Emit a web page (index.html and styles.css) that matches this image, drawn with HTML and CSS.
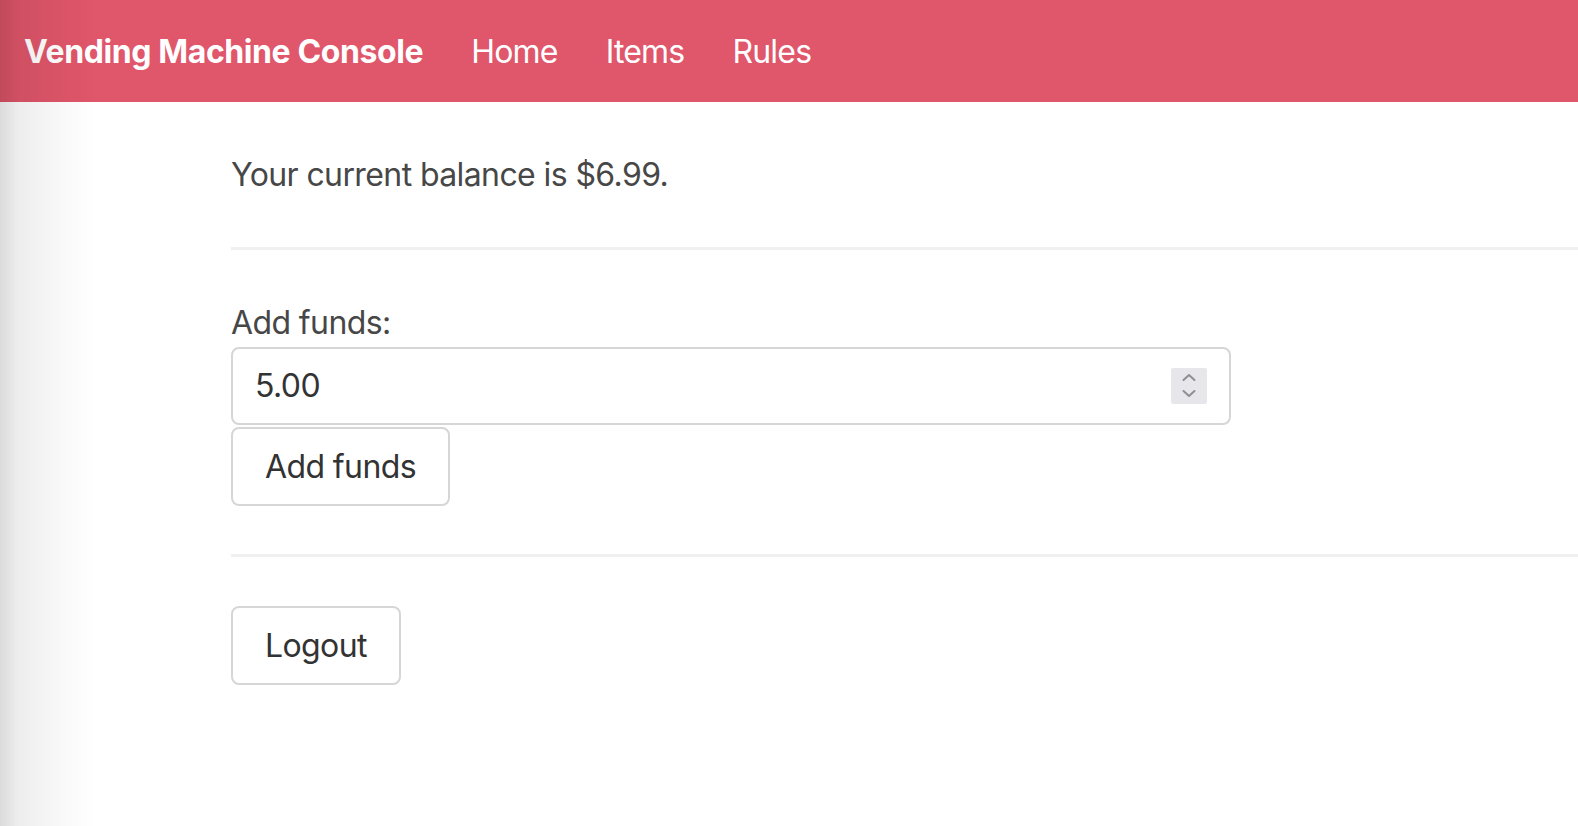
FILE: index.html
```html
<!DOCTYPE html>
<html lang="en">
<head>
<meta charset="utf-8">
<title>Vending Machine Console</title>
<link rel="stylesheet" href="styles.css">
</head>
<body>
<nav class="navbar">
  <a class="brand" href="#">Vending Machine Console</a>
  <a class="nav-link" href="#">Home</a>
  <a class="nav-link" href="#">Items</a>
  <a class="nav-link" href="#">Rules</a>
</nav>
<main class="content">
  <p class="balance">Your current balance is $6.99.</p>
  <hr class="rule">
  <form class="funds">
    <label class="label" for="amount">Add funds:</label>
    <div class="field">
      <input class="field-input" id="amount" type="text" value="5.00">
      <span class="spinner" aria-hidden="true">
        <svg width="36" height="36" viewBox="0 0 36 36">
          <path d="M12.5 12 L18 7 L23.5 12" fill="none" stroke="#8e8e93" stroke-width="2" stroke-linecap="round" stroke-linejoin="round"/>
          <path d="M12.5 23 L18 28 L23.5 23" fill="none" stroke="#8e8e93" stroke-width="2" stroke-linecap="round" stroke-linejoin="round"/>
        </svg>
      </span>
    </div>
    <button class="btn" type="button">Add funds</button>
  </form>
  <hr class="rule">
  <button class="btn" type="button">Logout</button>
</main>
<div class="edge-shadow"></div>
</body>
</html>
```

FILE: styles.css
```css
* { box-sizing: border-box; }

html, body {
  margin: 0;
  padding: 0;
  background: #ffffff;
  font-family: Inter, "Liberation Sans", sans-serif;
  font-size: 32px;
  letter-spacing: -0.6px;
  color: #474747;
}

.navbar {
  display: flex;
  align-items: center;
  height: 102px;
  padding: 0 0 0 24px;
  background: #e0566a;
  gap: 48px;
}

.brand {
  color: #ffffff;
  font-weight: 700;
  text-decoration: none;
  font-size: 32px;
  letter-spacing: -0.4px;
}

.nav-link {
  color: #ffffff;
  text-decoration: none;
  font-size: 32px;
  letter-spacing: -0.8px;
}

.content {
  padding: 49px 0 0 231px;
}

.balance {
  margin: 0;
  line-height: 48px;
  color: #474747;
}

.rule {
  border: 0;
  height: 3px;
  background: #f0f0f0;
  margin: 48px 0 49px 0;
}

.funds {
  display: flex;
  flex-direction: column;
  align-items: flex-start;
  margin: 0;
}

.label {
  line-height: 48px;
  color: #474747;
}

.field {
  display: flex;
  align-items: center;
  width: 1000px;
  height: 78px;
  border: 2px solid #d6d6d6;
  border-radius: 8px;
  padding: 0 22px 0 22px;
  background: #ffffff;
}

.field-input {
  flex: 1;
  border: 0;
  outline: none;
  padding: 0;
  margin: 0;
  font-family: inherit;
  font-size: 32px;
  letter-spacing: -0.6px;
  line-height: 38px;
  color: #333333;
  background: transparent;
}

.spinner {
  display: block;
  width: 36px;
  height: 36px;
  background: #e6e6eb;
  border-radius: 2px;
}

.spinner svg { display: block; }

.btn {
  margin-top: 2px;
  height: 79px;
  padding: 0 32px;
  border: 2px solid #d6d6d6;
  border-radius: 8px;
  background: #ffffff;
  font-family: inherit;
  font-size: 32px;
  letter-spacing: -0.6px;
  line-height: 38px;
  color: #333333;
}

.content > .btn { margin-top: 0; }

.edge-shadow {
  position: fixed;
  left: 0;
  top: 0;
  width: 95px;
  height: 100%;
  pointer-events: none;
  background: linear-gradient(to right, rgba(0,0,0,0.14) 0px, rgba(0,0,0,0.07) 18px, rgba(0,0,0,0.03) 55px, rgba(0,0,0,0) 95px);
}
```
